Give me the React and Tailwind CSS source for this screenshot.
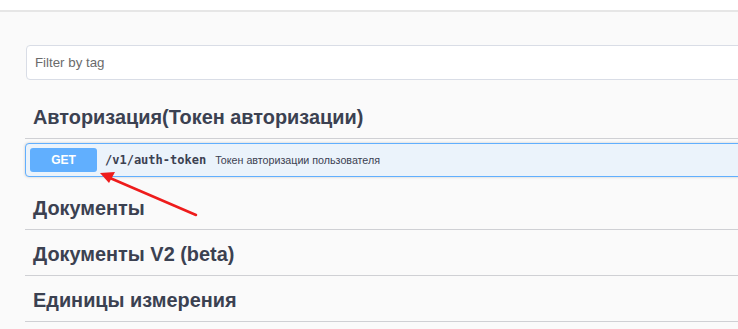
export default function App() {
  const tags = ["Документы", "Документы V2 (beta)", "Единицы измерения"];
  return (
    <div className="relative min-h-screen overflow-hidden bg-[#fafafa] font-['Liberation_Sans',Arial,sans-serif]">
      <div className="h-[12px] bg-white border-b-2 border-[#e6e6e6]" />
      <div className="pl-[25px]">
        <div className="mt-[33px] ml-px h-[35px] w-[800px] rounded-[4px] border border-[#d9dde6] bg-white flex items-center pl-[8px] text-[13.3px] text-[#6b6b6b]">
          Filter by tag
        </div>
        <div className="mt-[17px] h-[42px] flex items-center pl-[8px] border-b border-[#cfd0d4] text-[19.9px] font-bold text-[#3b4151]">
          Авторизация(Токен авторизации)
        </div>
        <div className="mt-[4px] h-[34px] w-[800px] rounded-[4px] border border-[#61affe] bg-[#ebf3fb] shadow-[0_0_3px_rgba(0,0,0,0.19)] flex items-center pl-[4px]">
          <div className="h-[24px] w-[67px] rounded-[3px] bg-[#61affe] flex items-center justify-center text-white text-[12px] font-bold">
            GET
          </div>
          <span className="ml-[8px] font-['DejaVu_Sans_Mono',monospace] font-bold text-[12px] text-[#3b4151]">
            /v1/auth-token
          </span>
          <span className="ml-[9px] text-[10.7px] text-[#3b4151]">
            Токен авторизации пользователя
          </span>
        </div>
        <div className="mt-[11px]">
          {tags.map((t) => (
            <div
              key={t}
              className="mb-[4px] h-[42px] flex items-center pl-[8px] border-b border-[#cfd0d4] text-[19.9px] font-bold text-[#3b4151]"
            >
              {t}
            </div>
          ))}
        </div>
      </div>
      <svg className="absolute left-0 top-0" width="738" height="329" viewBox="0 0 738 329">
        <line x1="196" y1="215" x2="110" y2="178" stroke="#ee1c1c" strokeWidth="2.5" strokeLinecap="round" />
        <polygon points="100,173 115,172 109,183" fill="#ee1c1c" />
      </svg>
    </div>
  );
}
